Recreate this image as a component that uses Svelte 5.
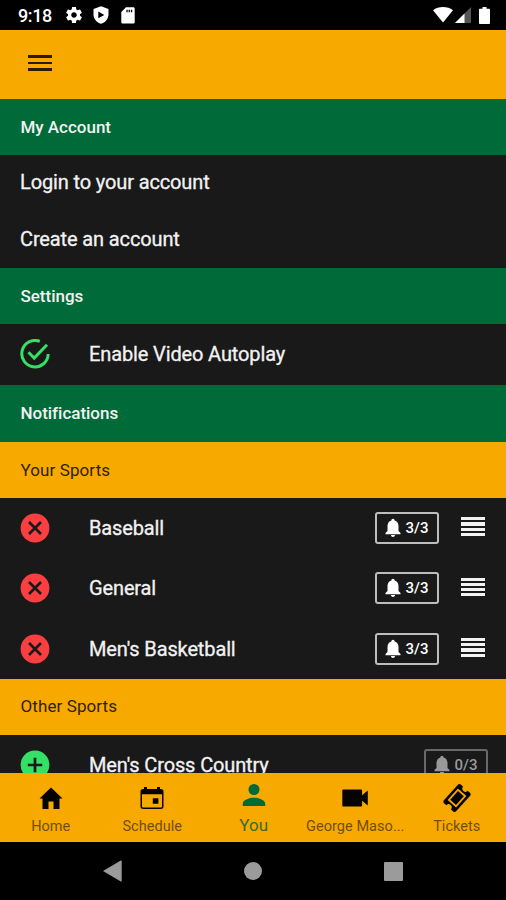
<script lang="ts">
	const links = ['Login to your account', 'Create an account'];

	const yourSports = [
		{ name: 'Baseball', alerts: '3/3' },
		{ name: 'General', alerts: '3/3' },
		{ name: "Men's Basketball", alerts: '3/3' }
	];

	const otherSports = [{ name: "Men's Cross Country", alerts: '0/3' }];

	const tabs = [
		{ id: 'home', label: 'Home' },
		{ id: 'schedule', label: 'Schedule' },
		{ id: 'you', label: 'You' },
		{ id: 'video', label: 'George Maso...' },
		{ id: 'tickets', label: 'Tickets' }
	];

	let active = $state('you');
	let autoplay = $state(true);
</script>

{#snippet bell(label: string, muted: boolean)}
	<span class="badge" class:muted>
		<svg class="bell" viewBox="0 0 16 20">
			<path d="M8 .8c1 0 1.600.7 1.600 1.700 2.600.8 3.900 2.900 3.900 5.500v5l2 2.100v1.200H.5v-1.200L2.500 13V8c0-2.600 1.300-4.700 3.900-5.500C6.400 1.500 7 .8 8 .8zM6 17h4c0 1.200-.9 2-2 2s-2-.8-2-2z" />
		</svg>
		<span class="count">{label}</span>
	</span>
{/snippet}

<div class="screen">
	<div class="status">
		<span class="clock">9:18</span>
		<svg class="gear" viewBox="2 2 20 20">
			<path d="M19.430 12.980c.04-.32.07-.64.07-.98s-.03-.66-.07-.98l2.110-1.650c.19-.15.24-.42.12-.64l-2-3.460c-.12-.22-.39-.3-.61-.22l-2.490 1c-.52-.4-1.080-.73-1.690-.98l-.38-2.650C14.460 2.180 14.250 2 14 2h-4c-.25 0-.46.18-.49.42l-.38 2.650c-.61.25-1.170.59-1.690.98l-2.490-1c-.23-.09-.49 0-.61.22l-2 3.460c-.13.22-.07.49.12.64l2.110 1.650c-.04.32-.07.65-.07.98s.03.66.07.98l-2.110 1.650c-.19.15-.24.42-.12.64l2 3.460c.12.22.39.3.61.22l2.490-1c.52.4 1.080.73 1.690.98l.38 2.650c.03.24.24.42.49.42h4c.25 0 .46-.18.49-.42l.38-2.650c.61-.25 1.170-.59 1.690-.98l2.490 1c.23.09.49 0 .61-.22l2-3.460c.12-.22.07-.49-.12-.64l-2.110-1.650zM12 15.500c-1.930 0-3.500-1.570-3.500-3.500s1.570-3.500 3.500-3.500 3.500 1.570 3.500 3.500-1.570 3.500-3.500 3.500z" />
		</svg>
		<svg class="shield" viewBox="0 0 16 18">
			<path fill-rule="evenodd" d="M8 .2 15.500 3v5.500c0 4.300-3.200 8-7.500 9.300C3.700 16.500.5 12.800.5 8.500V3zM5.300 5.500v6.800L11.300 8.900z" />
		</svg>
		<svg class="sd" viewBox="0 0 14 17">
			<path fill-rule="evenodd" d="M5 .3h7.300c.8 0 1.400.6 1.400 1.400v13.500c0 .8-.6 1.400-1.400 1.400H1.700c-.8 0-1.400-.6-1.400-1.400V5zM5.400 2.700v2.500h1.300V2.700zm2.200 0v2.500h1.300V2.700zm2.300 0v2.500h1.300V2.700z" />
		</svg>
		<span class="spacer"></span>
		<svg class="wifi" viewBox="0 0 20 16">
			<path d="M10 15.500 0 3.200C2.800 1.200 6.200 0 10 0s7.200 1.200 10 3.200z" />
		</svg>
		<svg class="signal" viewBox="0 0 16 16">
			<path fill="#555" d="M0 16 16 0v16z" />
			<path d="M0 16 9.500 6.500V16z" />
		</svg>
		<svg class="battery" viewBox="0 0 11 17">
			<path d="M3.500 0h4v1.700H10c.5 0 1 .4 1 1V16c0 .6-.5 1-1 1H1c-.5 0-1-.4-1-1V2.700c0-.6.5-1 1-1h2.500z" />
		</svg>
	</div>

	<header class="app-bar">
		<button class="menu" aria-label="Menu"><i></i><i></i><i></i></button>
	</header>

	<main class="content">
		<h2 class="section">My Account</h2>
		<nav class="links">
			{#each links as link}
				<a href="#account" class="link">{link}</a>
			{/each}
		</nav>

		<h2 class="section">Settings</h2>
		<button class="setting" onclick={() => (autoplay = !autoplay)}>
			<svg class="mark outline" viewBox="0 0 30 30">
				<path d="M19.800 2.400A13.200 13.200 0 1 0 28.200 15" />
				{#if autoplay}
					<path d="m8.500 13.300 5.700 5.700L27 5.800" />
				{/if}
			</svg>
			<span class="name">Enable Video Autoplay</span>
		</button>

		<h2 class="section tall">Notifications</h2>
		<h3 class="subsection">Your Sports</h3>
		<div class="sports">
			{#each yourSports as sport}
				<div class="row">
					<svg class="mark" viewBox="0 0 30 30">
						<circle cx="15" cy="15" r="14.400" fill="#fb3f41" />
						<path class="cross" d="m9 9 12 12M21 9 9 21" />
					</svg>
					<span class="name">{sport.name}</span>
					{@render bell(sport.alerts, false)}
					<span class="handle"><i></i><i></i><i></i><i></i></span>
				</div>
			{/each}
		</div>

		<h3 class="subsection">Other Sports</h3>
		{#each otherSports as sport}
			<div class="row">
				<svg class="mark" viewBox="0 0 30 30">
					<circle cx="15" cy="15" r="14.400" fill="#34e065" />
					<path class="cross" d="M15 7.800v14.400M7.800 15h14.400" />
				</svg>
				<span class="name">{sport.name}</span>
				{@render bell(sport.alerts, true)}
			</div>
		{/each}
	</main>

	<nav class="tabs">
		{#each tabs as tab}
			<button class="tab" class:active={active === tab.id} onclick={() => (active = tab.id)}>
				<svg class="tab-icon" viewBox="0 0 28 28">
					{#if tab.id === 'home'}
						<path d="M11.500 25v-7.500h5V25h6V14.500H25.500L14 3.500 2.500 14.500h3V25z" />
					{:else if tab.id === 'schedule'}
						<path fill-rule="evenodd" d="M6 3h3v2h10V3h3v2h1c1.500 0 2.500 1 2.500 2.500v15c0 1.500-1 2.500-2.500 2.500H5c-1.500 0-2.500-1-2.500-2.500v-15C2.500 6 3.500 5 5 5h1zM4 10.300v12c0 .8.4 1.200 1.200 1.200h17.600c.8 0 1.200-.4 1.200-1.200v-12zM14.800 14.300h5.600v5.500h-5.600z" />
					{:else if tab.id === 'you'}
						<path d="M14 14a5.500 5.500 0 1 0 0-11 5.500 5.500 0 0 0 0 11zM2.800 25v-2.400c0-4 7.500-5.800 11.200-5.800s11.200 1.800 11.200 5.800V25z" />
					{:else if tab.id === 'video'}
						<path d="M2.600 5.500h17.200c.8 0 1.300.5 1.300 1.300v4.500l5.700-4.800v15l-5.700-4.800v4.500c0 .8-.5 1.300-1.300 1.300H2.600c-.8 0-1.300-.5-1.300-1.300V6.800c0-.8.5-1.300 1.300-1.300z" />
					{:else}
						<g transform="rotate(-48 14 14)">
							<path fill-rule="evenodd" d="M3.500 5.800h21c1.200 0 2 .8 2 2V11a3 3 0 0 0 0 6v3.200c0 1.200-.8 2-2 2h-21c-1.200 0-2-.8-2-2V17a3 3 0 0 0 0-6V7.800c0-1.200.8-2 2-2zM6.300 8.300v11.400h15.400V8.300z" />
							<path d="M8.200 10.100h11.600v7.800H8.200z" />
						</g>
					{/if}
				</svg>
				<span class="tab-label">{tab.label}</span>
			</button>
		{/each}
	</nav>

	<div class="system-nav">
		<svg class="back" viewBox="0 0 19 22"><path d="M0 11 17.800.6q.9-.4.9.5v19.800q0 .9-.9.500z" /></svg>
		<span class="home-dot"></span>
		<span class="recents"></span>
	</div>
</div>

<style>
	:global(body) {
		background: #000;
	}

	.screen {
		display: flex;
		flex-direction: column;
		width: 506px;
		height: 900px;
		overflow: hidden;
		background: #191919;
		color: #f2f2f2;
		font-family: Roboto, sans-serif;
	}

	button {
		padding: 0;
		border: 0;
		background: none;
		color: inherit;
		font: inherit;
	}

	svg {
		display: block;
		flex-shrink: 0;
		fill: currentColor;
	}

	/* === STATUS BAR === */
	.status {
		display: flex;
		align-items: center;
		height: 29.500px;
		padding: 1px 16px 0 18px;
		box-sizing: border-box;
		flex-shrink: 0;
		background: #000;
		color: #fff;
	}

	.clock {
		width: 48px;
		font-size: 18px;
		font-weight: 500;
		letter-spacing: -0.4px;
	}

	.gear {
		width: 16px;
		height: 16px;
	}

	.shield {
		width: 16px;
		height: 18px;
		margin-left: 11px;
	}

	.sd {
		width: 14px;
		height: 17px;
		margin-left: 12px;
	}

	.spacer {
		flex: 1;
	}

	.wifi {
		width: 20px;
		height: 16px;
	}

	.signal {
		width: 16px;
		height: 16px;
		margin: 0 8px 0 2px;
	}

	.battery {
		width: 11px;
		height: 17px;
	}

	/* === APP BAR === */
	.app-bar {
		display: flex;
		align-items: center;
		height: 69.500px;
		padding: 0 28px;
		flex-shrink: 0;
		background: #f8a900;
	}

	.menu {
		display: grid;
		gap: 4px;
		width: 24px;
		margin-top: -3px;
	}

	.menu i {
		height: 2.500px;
		background: #2b1b05;
	}

	/* === LIST === */
	.content {
		flex: 1;
		min-height: 0;
		overflow: hidden;
	}

	.section,
	.subsection {
		display: flex;
		align-items: center;
		height: 56px;
		margin: 0;
		padding: 0 20.500px 1px;
		box-sizing: border-box;
		font-size: 17px;
	}

	.section {
		background: #006b38;
		font-weight: 500;
		letter-spacing: -0.02px;
	}

	.section.tall {
		height: 57px;
		padding-bottom: 2px;
	}

	.subsection {
		background: #f8a900;
		color: #2f2108;
		font-weight: 400;
		letter-spacing: 0.1px;
	}

	.link {
		display: flex;
		align-items: center;
		height: 56.500px;
		padding: 0 20px 2px;
		box-sizing: border-box;
		color: inherit;
		font-size: 20px;
		letter-spacing: -0.13px;
		text-decoration: none;
		-webkit-text-stroke: 0.3px currentColor;
	}

	.setting,
	.row {
		display: flex;
		align-items: center;
		width: 100%;
		padding: 0 18px 0 20px;
		box-sizing: border-box;
		text-align: left;
	}

	.setting {
		height: 61px;
		padding-bottom: 1px;
	}

	.row {
		height: 60.330px;
	}

	.mark {
		width: 30px;
		height: 30px;
		margin-right: 39px;
	}

	.outline {
		fill: none;
		stroke: #34e065;
		stroke-width: 3;
	}

	.cross {
		fill: none;
		stroke: #191919;
		stroke-width: 2.700;
	}

	.name {
		flex: 1;
		font-size: 20px;
		letter-spacing: -0.13px;
		-webkit-text-stroke: 0.3px currentColor;
	}

	.badge {
		display: flex;
		align-items: center;
		width: 64px;
		height: 32px;
		padding-left: 7.500px;
		box-sizing: border-box;
		border: 2px solid #bdbdbd;
		border-radius: 3px;
		color: #fff;
	}

	.badge.muted {
		border-color: #686868;
		color: #999;
	}

	.bell {
		width: 16px;
		height: 20px;
		margin-right: 5px;
	}

	.count {
		font-size: 15px;
		font-weight: 500;
	}

	.handle {
		display: grid;
		gap: 2px;
		width: 24px;
		margin: -3px 3px 0 22px;
	}

	.handle i {
		height: 3.200px;
		background: #f2f2f2;
	}

	/* === TABS === */
	.tabs {
		display: grid;
		grid-template-columns: repeat(5, 101.500px);
		height: 69px;
		flex-shrink: 0;
		background: #f8a900;
	}

	.tab {
		display: flex;
		flex-direction: column;
		align-items: center;
		padding-top: 11px;
		min-width: 0;
		color: #050300;
	}

	.tab-icon {
		width: 28px;
		height: 28px;
	}

	.tab-label {
		margin-top: 6px;
		color: #714e08;
		font-size: 14.500px;
		line-height: 18px;
		letter-spacing: 0.05px;
		white-space: nowrap;
	}

	.tab.active {
		padding-top: 8px;
		color: #006b38;
	}

	.active .tab-label {
		margin-top: 7px;
		color: #3a6b24;
		font-size: 17px;
	}

	/* === SYSTEM NAV === */
	.system-nav {
		display: flex;
		align-items: center;
		justify-content: space-between;
		height: 58px;
		padding: 0 103px;
		box-sizing: border-box;
		flex-shrink: 0;
		background: #000;
		color: #9b9b9b;
	}

	.back {
		width: 19px;
		height: 22px;
	}

	.home-dot {
		width: 18px;
		height: 18px;
		border-radius: 50%;
		background: currentColor;
	}

	.recents {
		width: 19px;
		height: 19px;
		border-radius: 1px;
		background: currentColor;
	}
</style>
